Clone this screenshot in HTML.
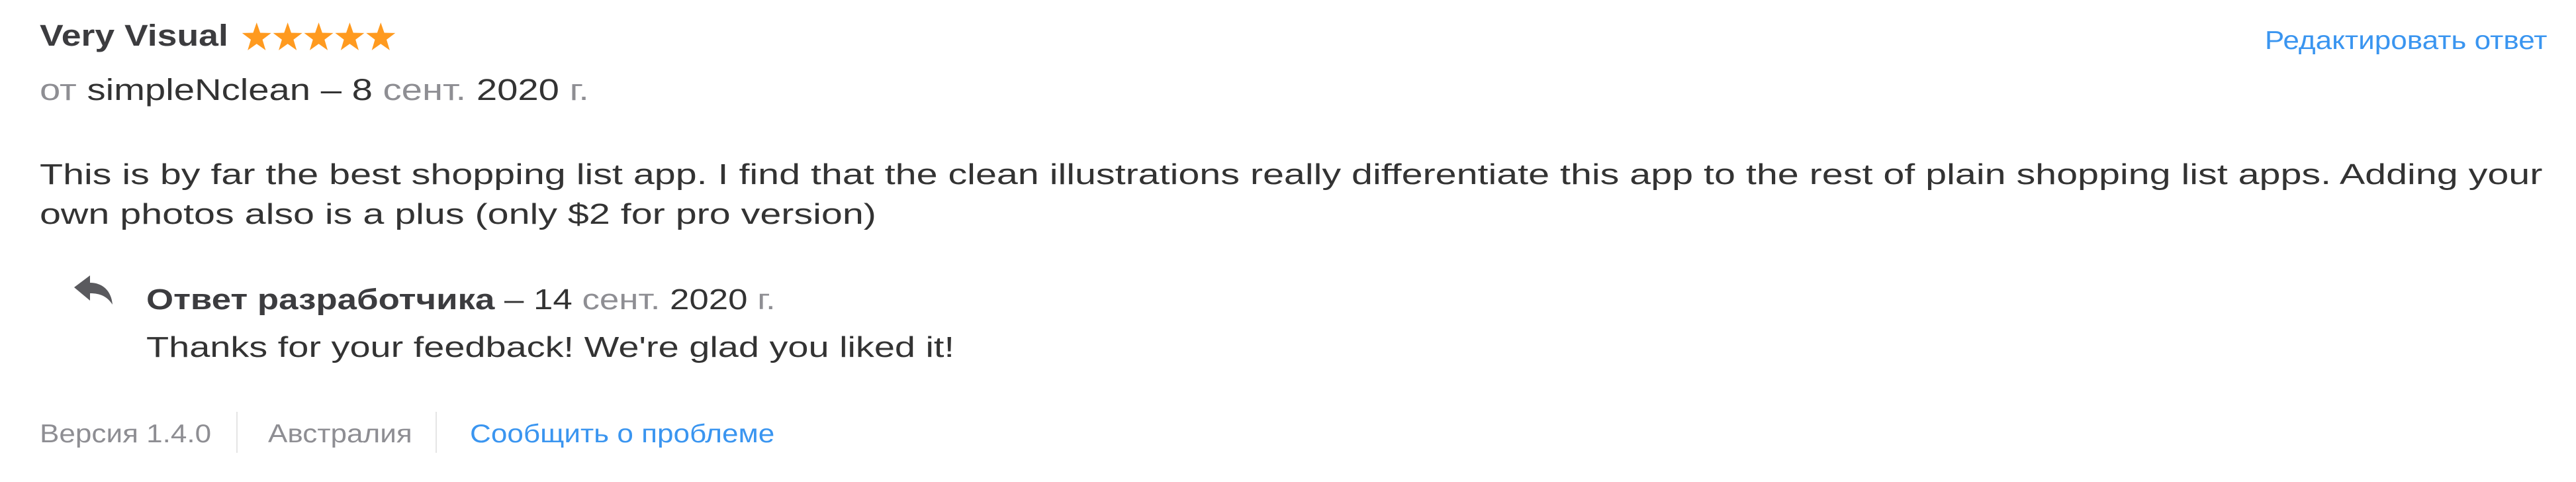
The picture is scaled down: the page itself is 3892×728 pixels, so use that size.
<!DOCTYPE html>
<html><head><meta charset="utf-8"><style>
html,body{margin:0;padding:0;background:#fff;width:3892px;height:728px;overflow:hidden;font-family:"Liberation Sans","DejaVu Sans",sans-serif;color:#333;}
.a{position:absolute;white-space:nowrap;transform-origin:0 0;}
.g{color:#8e8e93;}
.title{left:60px;top:28px;font-size:45px;font-weight:bold;color:#3c3c3f;transform:scaleX(1.19);}
.edit{right:44px;top:40px;font-size:39px;color:#3a95f0;transform:scaleX(1.13);transform-origin:100% 0;}
.by{left:60px;top:110px;font-size:45px;color:#333;transform:scaleX(1.25);}
.body{left:60px;top:234px;font-size:44px;line-height:60px;color:#333;transform:scaleX(1.305);}
.rh{left:221px;top:428px;font-size:44px;color:#333;transform:scaleX(1.2);}
.rt{left:221px;top:500px;font-size:44px;color:#333;transform:scaleX(1.27);}
.foot{left:60px;top:634px;font-size:39px;color:#8e8e93;transform:scaleX(1.13);}
.sep{position:absolute;top:622px;width:2px;height:62px;background:#e5e5e5;}
.link{color:#3a95f0;}
</style></head><body>
<div class="a title">Very Visual</div>
<svg class="a" style="left:362px;top:33px" width="240" height="44" viewBox="0 0 245 46">
<defs><path id="s" d="M24 1 L29.6 17.3 L47 17.6 L33.2 28.1 L38.2 44.8 L24 34.8 L9.8 44.8 L14.8 28.1 L1 17.6 L18.4 17.3 Z" fill="#ff9a1f"/></defs>
<use href="#s" x="0"/><use href="#s" x="49"/><use href="#s" x="98"/><use href="#s" x="147"/><use href="#s" x="196"/>
</svg>
<div class="a edit">Редактировать ответ</div>
<div class="a by"><span class="g">от</span> simpleNclean – 8 <span class="g">сент.</span> 2020 <span class="g">г.</span></div>
<div class="a body">This is by far the best shopping list app. I find that the clean illustrations really differentiate this app to the rest of plain shopping list apps. Adding your<br>own photos also is a plus (only $2 for pro version)</div>
<svg class="a" style="left:110px;top:414px" width="62" height="48" viewBox="0 0 62 48"><path d="M2 20 L26 2 L26 13 C44 13 58 24 60 46 C52 34 42 29 26 29 L26 40 Z" fill="#5a5a5e"/></svg>
<div class="a rh"><b style="color:#3c3c3f">Ответ разработчика</b> – 14 <span class="g">сент.</span> 2020 <span class="g">г.</span></div>
<div class="a rt">Thanks for your feedback! We're glad you liked it!</div>
<div class="a foot">Версия 1.4.0</div>
<div class="sep" style="left:357px"></div>
<div class="a foot" style="left:405px">Австралия</div>
<div class="sep" style="left:658px"></div>
<div class="a foot link" style="left:710px">Сообщить о проблеме</div>
</body></html>
